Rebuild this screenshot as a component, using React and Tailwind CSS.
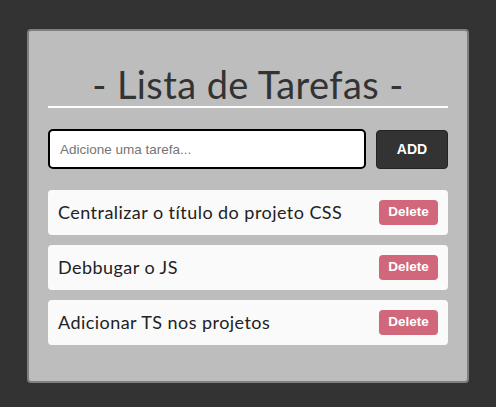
import React, { useState } from "react";

const rounded = { fontFamily: "Lato, 'Noto Sans', sans-serif" };
const arial = { fontFamily: "'Liberation Sans', Arial, sans-serif" };

export default function App() {
  const [text, setText] = useState("");
  const [tasks, setTasks] = useState([
    "Centralizar o título do projeto CSS",
    "Debbugar o JS",
    "Adicionar TS nos projetos",
  ]);

  function add() {
    const t = text.trim();
    if (!t) return;
    setTasks((prev) => [...prev, t]);
    setText("");
  }

  return (
    <div className="h-[407px] bg-[#333333] flex justify-center pt-[29px]">
      <div className="w-[442px] h-[354px] bg-[#bdbdbd] border-2 border-[#7f7f7f] rounded-[4px] px-[19px] pt-[33px]">
        <h1
          className="text-[38px] leading-[40px] tracking-[0.4px] text-[#333333] text-center border-b-2 border-white pb-[2px]"
          style={rounded}
        >
          - Lista de Tarefas -
        </h1>

        <div className="mt-[21px] flex gap-[10px]">
          <input
            className="w-[318px] h-[40px] bg-white border-2 border-black rounded-[5px] px-[10px] text-[13.5px] text-[#333] placeholder:text-[#757575] outline-none"
            style={arial}
            placeholder="Adicione uma tarefa..."
            value={text}
            onChange={(e) => setText(e.target.value)}
            onKeyDown={(e) => (e.key === "Enter" ? add() : null)}
          />
          <button
            className="w-[72px] h-[39px] mt-[1px] bg-[#333333] border border-[#222] rounded-[4px] text-white text-[14px] font-bold"
            style={arial}
            onClick={add}
          >
            ADD
          </button>
        </div>

        <ul className="mt-[21px] flex flex-col gap-[10px]">
          {tasks.map((t, i) => (
            <li
              key={i}
              className="h-[45px] bg-[#fafafa] rounded-[4px] flex items-center justify-between pl-[10px] pr-[10px]"
            >
              <span className="text-[18px] tracking-[0.45px] text-[#222222]" style={rounded}>
                {t}
              </span>
              <button
                className="w-[59px] h-[25px] bg-[#d0677a] rounded-[4px] text-white text-[13.5px] font-bold"
                style={arial}
                onClick={() => setTasks((prev) => prev.filter((_, j) => j !== i))}
              >
                Delete
              </button>
            </li>
          ))}
        </ul>
      </div>
    </div>
  );
}
